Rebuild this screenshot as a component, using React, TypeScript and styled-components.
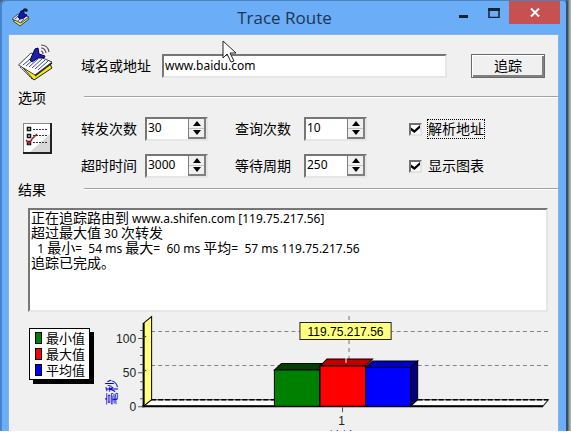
import React, { useState } from "react";
import styled, { createGlobalStyle } from "styled-components";

const cjk = `"Noto Sans", "Noto Sans CJK SC", sans-serif`;

const GlobalStyle = createGlobalStyle`
  *, *::before, *::after { box-sizing: border-box; }
  body { margin: 0; background: #fff; color: #000; font: 14px/20px ${cjk}; }
  button, input { font: inherit; color: inherit; border-radius: 0; }
`;

const Desktop = styled.div`
  position: relative;
  padding-right: 3px;
  background: linear-gradient(to left, #b9bcb8, #8d918f 2px, #55606c 3px);
`;

const Window = styled.main`
  display: flex;
  flex-direction: column;
  padding: 0 8px 0 9px;
  background: #6badf6;
  border-top: 1px solid #4c83bd;
  border-right: 2px solid #33506f;
  border-radius: 5px 4px 0 0;
  box-shadow: inset 2px 0 0 #4585cc;
`;

const TitleBar = styled.header`
  display: grid;
  grid-template-columns: 1fr auto 1fr;
  height: 34px;
  margin-right: -2px;
`;

const TitleIcon = styled.span`
  padding: 6px 0 0 2px;
`;

const Title = styled.h1`
  margin: 0;
  font: 17px/34px "Open Sans", sans-serif;
  color: #1d3653;
`;

const WindowControls = styled.div`
  display: flex;
  justify-content: flex-end;
`;

const ControlButton = styled.button<{ $danger?: boolean }>`
  display: grid;
  place-items: center;
  width: ${(p) => (p.$danger ? 51 : 30)}px;
  height: 23px;
  padding: 0;
  border: 0;
  background: ${(p) => (p.$danger ? "#c75050" : "transparent")};
`;

const Body = styled.div`
  padding-top: 9px;
  background: #f0f0f0;
  box-shadow: 0 0 0 1px #7fb4ea;
  overflow: hidden;
`;

const AddressRow = styled.form`
  display: grid;
  grid-template-columns: 63px 81px minmax(80px, 1fr) 74px;
  align-items: center;
  height: 44px;
  padding: 0 13px 0 9px;
`;

const RowIcon = styled.span`
  align-self: start;
  line-height: 0;
`;

const TextField = styled.input`
  min-width: 0;
  height: 24px;
  margin-right: 24px;
  padding: 0 1px 2px;
  border: 2px solid;
  border-color: #767676 #e6e6e6 #e6e6e6 #767676;
  background: #fff;
  font-size: 12px;
  outline: 0;
`;

const TraceButton = styled.button`
  height: 24px;
  padding: 0;
  border: 1px solid #6a6a6a;
  background: #f0f0f0;
  box-shadow: inset 1px 1px 0 #fff, inset -2px -2px 0 #808080;
  line-height: 20px;
`;

const SectionTitle = styled.h2`
  display: grid;
  grid-template-columns: 66px 1fr;
  margin: 0;
  padding-left: 9px;
  font: inherit;
  &::after {
    content: "";
    height: 2px;
    margin-top: 8px;
    background: linear-gradient(#a3a3a3 50%, #fff 50%);
  }
`;

const Options = styled.div`
  display: grid;
  grid-template-columns: 63px 64px 63px 27px 69px 63px 42px 1fr;
  grid-auto-rows: 24px;
  row-gap: 13px;
  align-items: center;
  padding: 9px 0 2px 9px;
`;

const OptionsIcon = styled.span`
  grid-row: span 2;
  align-self: start;
  padding: 6px 0 0 5px;
  line-height: 0;
`;

const FieldLabel = styled.label<{ $column?: number }>`
  ${(p) => p.$column && `grid-column: ${p.$column};`}
  white-space: nowrap;
`;

const SpinBox = styled.span`
  display: flex;
  height: 24px;
  border: 2px solid;
  border-color: #767676 #e6e6e6 #e6e6e6 #767676;
  background: #fff;
`;

const SpinInput = styled.input`
  flex: 1;
  min-width: 0;
  padding: 0 1px 2px;
  border: 0;
  background: transparent;
  font-size: 12px;
  line-height: 18px;
  outline: 0;
`;

const SpinButtons = styled.span`
  display: flex;
  flex-direction: column;
  width: 18px;
  border: solid #808080;
  border-width: 0 2px 2px 1px;
  background: #f0f0f0;
`;

const SpinButton = styled.button`
  display: grid;
  place-items: center;
  flex: 1;
  min-height: 0;
  padding: 0;
  border: 0;
  background: transparent;
  line-height: 0;
  & + & { border-top: 1px solid #c4c4c4; }
`;

const CheckLabel = styled.label`
  grid-column: 8;
  display: flex;
  align-items: center;
  gap: 5px;
`;

const CheckBox = styled.input`
  appearance: none;
  display: grid;
  place-items: center;
  width: 13px;
  height: 13px;
  margin: 0;
  border: 2px solid;
  border-color: #707070 #e3e3e3 #e3e3e3 #707070;
  background: #fff;
  &:checked::after {
    content: "";
    width: 9px;
    height: 8px;
    background: #000;
    clip-path: polygon(0 30%, 38% 62%, 100% 0, 100% 36%, 38% 100%, 0 68%);
  }
`;

const CheckText = styled.span<{ $focused?: boolean }>`
  border: 1px dotted ${(p) => (p.$focused ? "#000" : "transparent")};
  line-height: 18px;
`;

const Results = styled.pre`
  height: 104px;
  margin: 8px 10px 0 19px;
  padding: 1px;
  border: 2px solid;
  border-color: #767676 #e6e6e6 #e6e6e6 #767676;
  background: #fff;
  font: 12px/15px ${cjk};
  overflow: hidden;
`;

const Han = styled.span`
  font-size: 14px;
  line-height: 0;
`;

const ChartArea = styled.section`
  display: flex;
  align-items: flex-start;
  padding-left: 20px;
`;

const Legend = styled.ul`
  flex: none;
  width: 61px;
  margin: 16px 10px 0 0;
  padding: 1px 0 1px 5px;
  border: 1px solid #000;
  background: #fff;
  box-shadow: 4px 4px 0 #000;
  list-style: none;
`;

const LegendItem = styled.li<{ $color: string }>`
  display: flex;
  align-items: center;
  gap: 4px;
  font-size: 13px;
  line-height: 16px;
  white-space: nowrap;
  &::before {
    content: "";
    flex: none;
    width: 7px;
    height: 12px;
    border: 1px solid #000;
    background: ${(p) => p.$color};
  }
`;

const ChartSvg = styled.svg`
  flex: 1;
  min-width: 0;
  display: block;
  font-family: "Liberation Sans", "Noto Sans CJK SC", sans-serif;
  font-size: 12px;
`;

const Pointer = styled.svg`
  position: absolute;
  left: 222px;
  top: 40px;
  pointer-events: none;
`;

const NotesIcon = () => (
  <svg width="36" height="37" viewBox="0 0 36 37" aria-hidden="true">
    <path d="M5 24 16 36 34 24 31 18 17 29z" fill="#f4ea1c" stroke="#222" />
    <path d="M2 23 15 36" stroke="#333" strokeDasharray="2 1" />
    <path d="M0.500 21 13 9 34 18 17 31z" fill="#fff" stroke="#444" />
    <path d="M17 32 34 19" stroke="#222" strokeWidth="1.500" />
    <path d="m5 21 7-6m-4 7 8-7m-5 8 9-8m-6 9 10-9m-7 10 10-9m-7 10 10-9" stroke="#3d45b4" />
    <path d="M12 16 17 5 20 4 21 10 27 12 26 14 20 14 14 18z" fill="#1c20a8" stroke="#00004c" />
    <path d="M23 1q7 0 8 7M23 4q4 0 5 5M23 7q2 0 2 3" fill="none" stroke="#555" strokeWidth="1.200" />
  </svg>
);

const SmallNotesIcon = () => (
  <svg width="19" height="20" viewBox="0 0 19 20" aria-hidden="true">
    <path d="M2 14 9 19 18 12 17 9z" fill="#e9e34a" stroke="#444" />
    <path d="M1 12 7 7 18 10 10 16z" fill="#d5dce2" stroke="#455" />
    <path d="m4 12 3-3m0 5 4-4m-1 5 3-3" stroke="#667" />
    <path d="m7 10 3-6 3-1 0 4 3 1-3 3-4 1z" fill="#1519a5" stroke="#001060" />
    <path d="M12 2q3-2 5 1l-1 2-3-1z" fill="#101820" />
  </svg>
);

const ChecklistIcon = () => (
  <svg width="29" height="31" viewBox="0 0 29 31" aria-hidden="true">
    <path d="M0 0h29v31H0z" fill="#222" />
    <path d="M0 0h27v29H0z" fill="#888" />
    <path d="M1 1h26v28H1z" fill="#fff" />
    <path d="M27 11v18H7z" fill="#d8d8d8" />
    <path d="M4.500 4.500h3v3h-3zM4.500 11.500h3v3h-3zM4.500 18.500h3v3h-3z" fill="#fff" stroke="#111" strokeWidth="1.500" />
    <path d="M10 6.500h15M10 12.500h15M10 19.500h15" stroke="#333" strokeDasharray="2 1" />
    <path d="m3 17 3 4 3-5 5-5" fill="none" stroke="#a5222b" strokeWidth="1.500" />
  </svg>
);

const Arrow = ({ down }: { down?: boolean }) => (
  <svg width="8" height="5" viewBox="0 0 8 5" aria-hidden="true">
    <path d={down ? "M0 0h8L4 5z" : "M0 5h8L4 0z"} />
  </svg>
);

function Spinner({ id, initial, step }: { id: string; initial: number; step: number }) {
  const [value, setValue] = useState(initial);
  return (
    <SpinBox>
      <SpinInput id={id} inputMode="numeric" value={value} onChange={(e) => setValue(Number(e.target.value) || 0)} />
      <SpinButtons>
        <SpinButton type="button" aria-label="增加" onClick={() => setValue(value + step)}>
          <Arrow />
        </SpinButton>
        <SpinButton type="button" aria-label="减少" onClick={() => setValue(Math.max(0, value - step))}>
          <Arrow down />
        </SpinButton>
      </SpinButtons>
    </SpinBox>
  );
}

const output = `正在追踪路由到 www.a.shifen.com [119.75.217.56]
超过最大值 30 次转发
  1 最小=  54 ms 最大=  60 ms 平均=  57 ms 119.75.217.56
追踪已完成。`;

const MixedText = ({ text }: { text: string }) => (
  <>
    {text.split(/([\u3000-\u9fff]+)/).map((part, i) => (i % 2 ? <Han key={i}>{part}</Han> : part))}
  </>
);

const series = [
  { name: "最小值", color: "#008000" },
  { name: "最大值", color: "#ff0000" },
  { name: "平均值", color: "#0000ff" },
];

const Chart = () => (
  <ChartSvg viewBox="100 312 457 119" role="img" aria-label="毫秒">
    <path d="M151 331.500H547M151 365.500H547" stroke="#858585" strokeDasharray="4 3" />
    <path d="M348.500 316V360" stroke="#777" strokeDasharray="4 4" />
    <path d="m143 406 8-6.500H547.500L542 406z" fill="#fff" stroke="#333" />
    <path d="M151 399.500H547" stroke="#000" strokeWidth="1.500" strokeDasharray="5 2" />
    <path d="m143.500 323 8-6.500v83l-8 6.500z" fill="#ffff80" stroke="#000" />
    <path d="M143.500 323V407" stroke="#000" strokeWidth="2" />
    <path d="M142 406H542" stroke="#000" strokeWidth="2" />
    <path d="M138 338.500h5M138 372.500h5M138 406.500h5M140 330.500h3M140 347.500h3M140 355.500h3M140 364.500h3M140 381.500h3M140 389.500h3M140 398.500h3M342 407v5" stroke="#555" />
    <path d="m143 338 3-2m-3 36 3-2" stroke="#333" />
    <g stroke="#000">
      <path d="m274 370 7-6.500h45l-7 6.500z" fill="#004000" />
      <path d="M274 370h45.500v36H274z" fill="#008000" />
      <path d="m319.500 366 7-7H372l-7 7z" fill="#c00000" />
      <path d="M319.500 366H365v40h-45.500z" fill="#f00" />
      <path d="m365 367.500 7-6.500h45l-7 6.500z" fill="#0000c0" />
      <path d="m410 367.500 7-6.500v38.500l-7 6.500z" fill="#000080" />
      <path d="M365 367.500h45V406h-45z" fill="#00f" />
    </g>
    <path d="M345.500 355v8" stroke="#fff" />
    <path d="M299.500 322.500h91v17h-91z" fill="#ffff80" stroke="#222" />
    <text x="345" y="336" textAnchor="middle">119.75.217.56</text>
    <g textAnchor="end" fill="#222">
      <text x="136" y="343">100</text>
      <text x="136" y="377">50</text>
      <text x="136" y="411">0</text>
    </g>
    <text x="341" y="425" textAnchor="middle" fill="#222">1</text>
    <g fill="#0000d8" fontSize="13" textAnchor="middle">
      <text transform="translate(116 392) rotate(-90)">毫秒</text>
      <text x="341" y="441">地址</text>
    </g>
  </ChartSvg>
);

export default function App() {
  const [resolve, setResolve] = useState(true);
  const [graph, setGraph] = useState(true);
  return (
    <>
      <GlobalStyle />
      <Desktop>
        <Window>
          <TitleBar>
            <TitleIcon><SmallNotesIcon /></TitleIcon>
            <Title>Trace Route</Title>
            <WindowControls>
              <ControlButton aria-label="最小化">
                <svg width="10" height="11"><path d="M0 8h9v3H0z" fill="#142538" /></svg>
              </ControlButton>
              <ControlButton aria-label="最大化">
                <svg width="12" height="10"><path d="M1 1.500h10v8H1z" fill="none" stroke="#142538" strokeWidth="1.500" /><path d="M0 0h12v3H0z" fill="#142538" /></svg>
              </ControlButton>
              <ControlButton $danger aria-label="关闭">
                <svg width="10" height="9"><path d="m1 .5 8 8m0-8-8 8" stroke="#fff" strokeWidth="2" /></svg>
              </ControlButton>
            </WindowControls>
          </TitleBar>
          <Body>
            <AddressRow onSubmit={(e) => e.preventDefault()}>
              <RowIcon><NotesIcon /></RowIcon>
              <FieldLabel htmlFor="address">域名或地址</FieldLabel>
              <TextField id="address" defaultValue="www.baidu.com" />
              <TraceButton type="submit">追踪</TraceButton>
            </AddressRow>
            <SectionTitle>选项</SectionTitle>
            <Options>
              <OptionsIcon><ChecklistIcon /></OptionsIcon>
              <FieldLabel htmlFor="hops">转发次数</FieldLabel>
              <Spinner id="hops" initial={30} step={1} />
              <FieldLabel htmlFor="queries" $column={5}>查询次数</FieldLabel>
              <Spinner id="queries" initial={10} step={1} />
              <CheckLabel>
                <CheckBox type="checkbox" checked={resolve} onChange={() => setResolve(!resolve)} />
                <CheckText $focused>解析地址</CheckText>
              </CheckLabel>
              <FieldLabel htmlFor="timeout">超时时间</FieldLabel>
              <Spinner id="timeout" initial={3000} step={100} />
              <FieldLabel htmlFor="period" $column={5}>等待周期</FieldLabel>
              <Spinner id="period" initial={250} step={10} />
              <CheckLabel>
                <CheckBox type="checkbox" checked={graph} onChange={() => setGraph(!graph)} />
                <CheckText>显示图表</CheckText>
              </CheckLabel>
            </Options>
            <SectionTitle>结果</SectionTitle>
            <Results role="log" aria-label="结果"><MixedText text={output} /></Results>
            <ChartArea>
              <Legend>
                {series.map((s) => (
                  <LegendItem key={s.name} $color={s.color}>{s.name}</LegendItem>
                ))}
              </Legend>
              <Chart />
            </ChartArea>
          </Body>
        </Window>
        <Pointer width="15" height="24" viewBox="0 0 15 24" aria-hidden="true">
          <path d="M1 1v17l4-4 4 8 3-1-4-8h6z" fill="#fff" stroke="#222" />
        </Pointer>
      </Desktop>
    </>
  );
}
